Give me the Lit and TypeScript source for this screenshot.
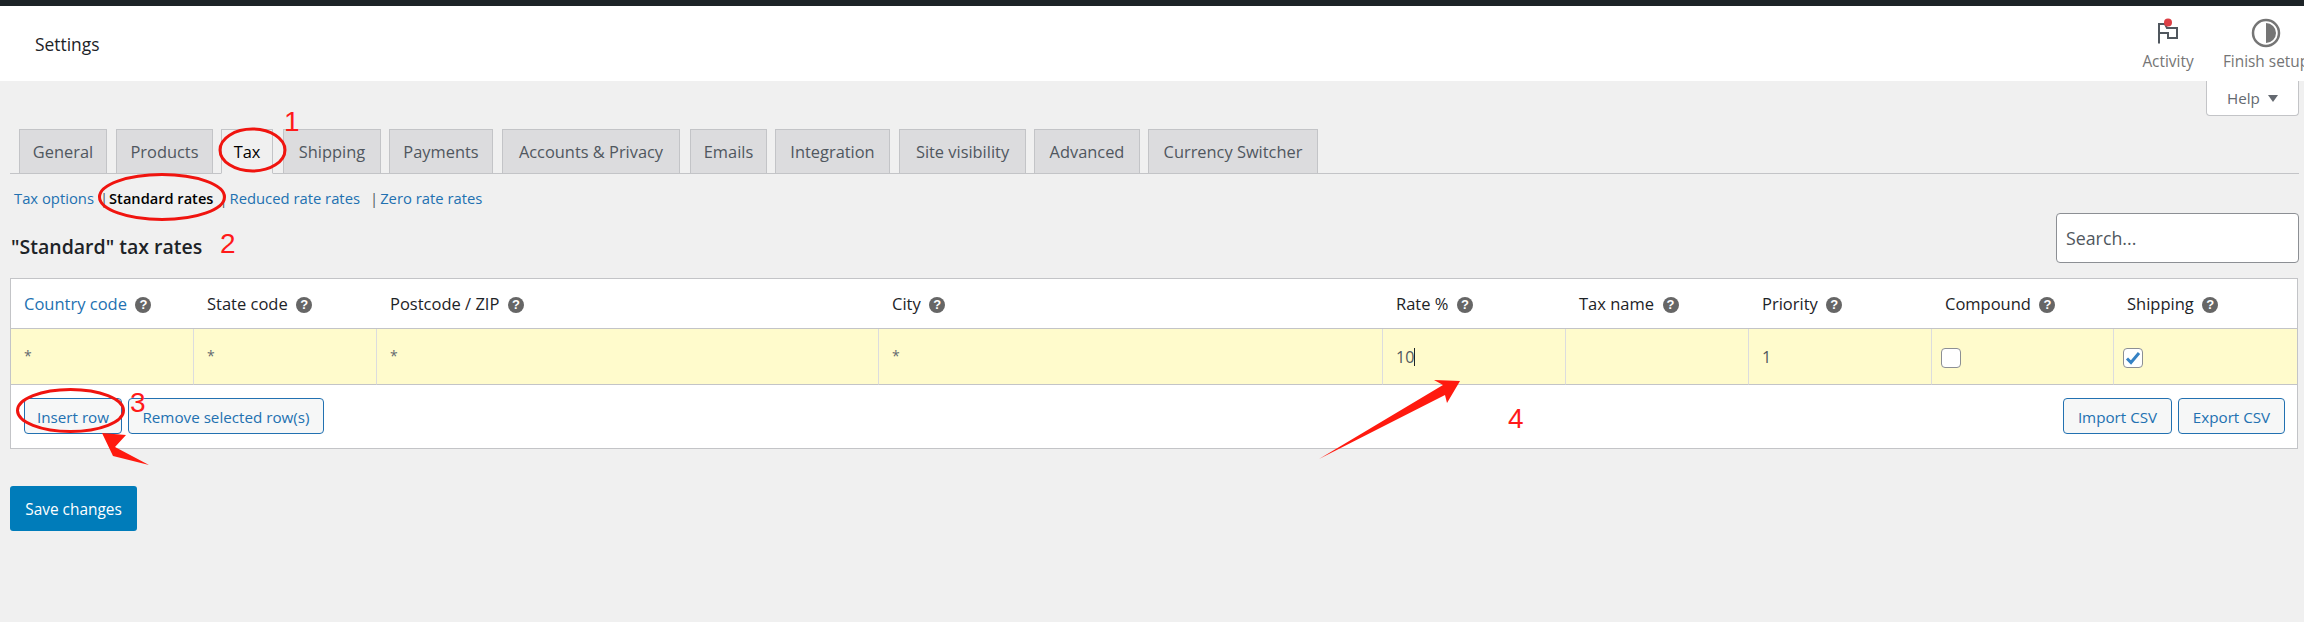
import { LitElement, html, css, svg } from "lit";
import { customElement } from "lit/decorators.js";

const TABS = [
  { t: "General", gap: 9, w: 88 },
  { t: "Products", gap: 9, w: 97 },
  { t: "Tax", gap: 8, w: 52, active: true },
  { t: "Shipping", gap: 10, w: 98 },
  { t: "Payments", gap: 8, w: 104 },
  { t: "Accounts & Privacy", gap: 9, w: 178 },
  { t: "Emails", gap: 10, w: 77 },
  { t: "Integration", gap: 8, w: 115 },
  { t: "Site visibility", gap: 9, w: 127 },
  { t: "Advanced", gap: 8, w: 106 },
  { t: "Currency Switcher", gap: 8, w: 170 },
];

const COLS = [
  { t: "Country code", link: true, v: "*" },
  { t: "State code", v: "*" },
  { t: "Postcode / ZIP", v: "*" },
  { t: "City", v: "*" },
  { t: "Rate %", v: "10", caret: true },
  { t: "Tax name", v: "" },
  { t: "Priority", v: "1" },
  { t: "Compound", check: false },
  { t: "Shipping", check: true },
];

@customElement("app-root")
export class AppRoot extends LitElement {
  static styles = css`
    :host {
      display: block;
      width: 2304px;
      height: 622px;
      position: relative;
      overflow: hidden;
      background: #f0f0f0;
      font-family: "Open Sans", "Noto Sans", sans-serif;
      font-size: 15px;
      color: #3c434a;
    }
    .topbar { height: 6px; background: #1d2327; }
    .header {
      height: 75px;
      background: #fff;
      display: flex;
      align-items: center;
      justify-content: space-between;
      overflow: hidden;
    }
    .title { margin-left: 35px; font-weight: 500; font-size: 17.4px; color: #1d2327; }
    .actions { display: flex; margin-right: -11px; }
    .action {
      width: 98px;
      height: 75px;
      display: flex;
      flex-direction: column;
      align-items: center;
      color: #757575;
      font-size: 15.4px;
      white-space: nowrap;
    }
    .action-icon { height: 32px; margin-top: 11px; display: flex; align-items: center; justify-content: center; }
    .action-icon svg { display: block; overflow: visible; }
    .action-label { margin-top: 3px; line-height: 20px; }
    .help-row { display: flex; justify-content: flex-end; padding-right: 5px; height: 35px; }
    .help {
      box-sizing: border-box;
      width: 93px;
      height: 35px;
      background: #fff;
      border: 1px solid #c3c4c7;
      border-top: none;
      border-radius: 0 0 4px 4px;
      display: flex;
      align-items: center;
      padding-left: 20px;
      gap: 8px;
      color: #646970;
      font-size: 15.2px;
    }
    .tri { width: 0; height: 0; border-left: 5px solid transparent; border-right: 5px solid transparent; border-top: 7px solid #646970; }
    main { padding: 13px 5px 0 10px; }
    .tabs {
      display: flex;
      height: 44px;
      border-bottom: 1px solid #c3c4c7;
      box-sizing: content-box;
    }
    .tab {
      box-sizing: border-box;
      height: 45px;
      flex: none;
      background: #dcdcde;
      border: 1px solid #c3c4c7;
      display: flex;
      align-items: center;
      justify-content: center;
      color: #50575e;
      font-weight: 500;
      font-size: 16.4px;
      white-space: nowrap;
    }
    .tab.active { background: #f0f0f0; border-bottom-color: #f0f0f0; color: #000; }
    .subs {
      display: flex;
      align-items: center;
      height: 22px;
      padding: 13px 0 4px 4px;
      line-height: 22px;
      font-size: 14.8px;
      white-space: nowrap;
    }
    .subs a { color: #2271b1; }
    .subs b { color: #000; font-weight: 600; font-size: 14.6px; }
    .sep { color: #50575e; font-weight: 400; }
    .sep.a { margin-left: 6px; margin-right: 1px; }
    .sep.b { margin-left: 6px; margin-right: 2px; }
    .sep.c { margin-left: 10px; margin-right: 2px; }
    .title-row { display: flex; justify-content: space-between; height: 50px; margin-bottom: 15px; }
    h2 { margin: 20px 0 0 1px; font-size: 19.5px; line-height: 28px; font-weight: 600; color: #1d2327; white-space: nowrap; }
    .search {
      box-sizing: border-box;
      width: 243px;
      height: 50px;
      margin-left: auto;
      background: #fff;
      border: 1px solid #8c8f94;
      border-radius: 4px;
      display: flex;
      align-items: center;
      padding-left: 9px;
      font-size: 17.8px;
      color: #50575e;
    }
    .panel {
      box-sizing: border-box;
      width: 2288px;
      height: 171px;
      background: #fff;
      border: 1px solid #c3c4c7;
    }
    .grid {
      display: grid;
      grid-template-columns: 183px 183px 502px 504px 183px 183px 183px 182px 1fr;
    }
    .th {
      box-sizing: border-box;
      height: 50px;
      border-bottom: 1px solid #c3c4c7;
      padding-left: 13px;
      display: flex;
      align-items: center;
      gap: 8.5px;
      color: #1d2327;
      font-size: 16.5px;
      white-space: nowrap;
    }
    .th a { color: #2271b1; }
    .tip {
      width: 16px;
      height: 16px;
      border-radius: 50%;
      background: #666;
      color: #fff;
      font-family: "Liberation Sans", sans-serif;
      font-size: 13px;
      font-weight: 700;
      line-height: 16px;
      text-align: center;
      margin-top: 3px;
    }
    .td {
      box-sizing: border-box;
      height: 56px;
      background: #fffbcc;
      border-bottom: 1px solid #c3c4c7;
      border-right: 1px solid #dcdcde;
      padding-left: 13px;
      display: flex;
      align-items: center;
      color: #50575e;
      font-size: 16px;
    }
    .td:last-child { border-right: none; }
    .td.check { padding-left: 9px; padding-top: 2px; }
    .td.star { color: #646970; font-size: 14px; padding-bottom: 2px; }
    .val { display: inline-flex; align-items: center; }
    .caret { display: inline-block; width: 1px; height: 18px; background: #1d2327; }
    .box {
      box-sizing: border-box;
      width: 20px;
      height: 20px;
      border: 1px solid #8c8f94;
      border-radius: 4px;
      background: #fff;
      display: flex;
      align-items: center;
      justify-content: center;
    }
    .foot { display: flex; justify-content: space-between; padding: 13px 12px 0 13px; }
    .btn-group { display: flex; gap: 6px; }
    .btn {
      box-sizing: border-box;
      height: 36px;
      padding-top: 2px;
      background: #f6f7f7;
      border: 1px solid #2271b1;
      border-radius: 4px;
      color: #2271b1;
      font-size: 15.2px;
      display: flex;
      align-items: center;
      justify-content: center;
      white-space: nowrap;
    }
    .save {
      box-sizing: border-box;
      width: 127px;
      height: 45px;
      margin-top: 37px;
      padding-top: 2px;
      background: #007cba;
      border-radius: 3px;
      color: #fff;
      font-size: 15.4px;
      display: flex;
      align-items: center;
      justify-content: center;
    }
    .marks { position: absolute; left: 0; top: 0; width: 2304px; height: 622px; pointer-events: none; }
    .marks text { font-family: "Liberation Sans", sans-serif; font-size: 28px; fill: #ff1a1a; }
  `;

  private tip() {
    return html`<span class="tip">?</span>`;
  }

  private marks() {
    return svg`
      <g fill="none" stroke="#f0140f" stroke-width="3">
        <ellipse cx="252.5" cy="150" rx="32.5" ry="21"></ellipse>
        <ellipse cx="162" cy="197" rx="62.5" ry="22.5"></ellipse>
        <ellipse cx="70.5" cy="410.5" rx="53" ry="21"></ellipse>
      </g>
      <g fill="#ff1a0f">
        <polygon points="102,433 126,435 115,447 149,465 113,456"></polygon>
        <polygon points="1460,381 1434,380 1443,385 1319,459 1445,395 1447,403"></polygon>
      </g>
      <text x="284" y="131">1</text>
      <text x="220" y="253">2</text>
      <text x="130" y="412">3</text>
      <text x="1508" y="428">4</text>
    `;
  }

  render() {
    return html`
      <div class="topbar"></div>
      <div class="header">
        <div class="title">Settings</div>
        <div class="actions">
          <div class="action">
            <div class="action-icon">
              <svg width="22" height="24" viewBox="0 0 22 24">
                <path d="M2 22.5V3H8L10 7H20V17H11V12H2" fill="none" stroke="#50575e" stroke-width="2"></path>
                <circle cx="11" cy="1.5" r="4" fill="#dc3f45"></circle>
              </svg>
            </div>
            <div class="action-label">Activity</div>
          </div>
          <div class="action">
            <div class="action-icon">
              <svg width="30" height="30" viewBox="0 0 30 30">
                <circle cx="15" cy="15" r="13" fill="none" stroke="#757575" stroke-width="2.5"></circle>
                <path d="M15 5A10 10 0 0 1 15 25Z" fill="#757575"></path>
              </svg>
            </div>
            <div class="action-label">Finish setup</div>
          </div>
        </div>
      </div>
      <div class="help-row"><div class="help">Help <span class="tri"></span></div></div>
      <main>
        <nav class="tabs">
          ${TABS.map(
            (t) => html`<div
              class="tab ${t.active ? "active" : ""}"
              style="width:${t.w}px;margin-left:${t.gap}px"
            >${t.t}</div>`
          )}
        </nav>
        <div class="subs">
          <a>Tax options</a><span class="sep a">|</span><b>Standard rates</b><span class="sep b">|</span><a>Reduced rate rates</a><span class="sep c">|</span><a>Zero rate rates</a>
        </div>
        <div class="title-row">
          <h2>"Standard" tax rates</h2>
          <div class="search">Search...</div>
        </div>
        <section class="panel">
          <div class="grid">
            ${COLS.map(
              (c) => html`<div class="th">${c.link ? html`<a>${c.t}</a>` : c.t}${this.tip()}</div>`
            )}
            ${COLS.map((c) =>
              c.check !== undefined
                ? html`<div class="td check"><span class="box">${c.check
                    ? html`<svg width="16" height="14" viewBox="0 0 16 14"><path d="M2 7.5L6 11.5L14 2" fill="none" stroke="#3582c4" stroke-width="3"></path></svg>`
                    : ""}</span></div>`
                : html`<div class="td ${c.v === "*" ? "star" : ""}"><span class="val">${c.v}${c.caret ? html`<span class="caret"></span>` : ""}</span></div>`
            )}
          </div>
          <div class="foot">
            <div class="btn-group">
              <div class="btn" style="width:98px">Insert row</div>
              <div class="btn" style="width:196px">Remove selected row(s)</div>
            </div>
            <div class="btn-group">
              <div class="btn" style="width:109px">Import CSV</div>
              <div class="btn" style="width:107px">Export CSV</div>
            </div>
          </div>
        </section>
        <div class="save">Save changes</div>
      </main>
      <svg class="marks" viewBox="0 0 2304 622">${this.marks()}</svg>
    `;
  }
}
